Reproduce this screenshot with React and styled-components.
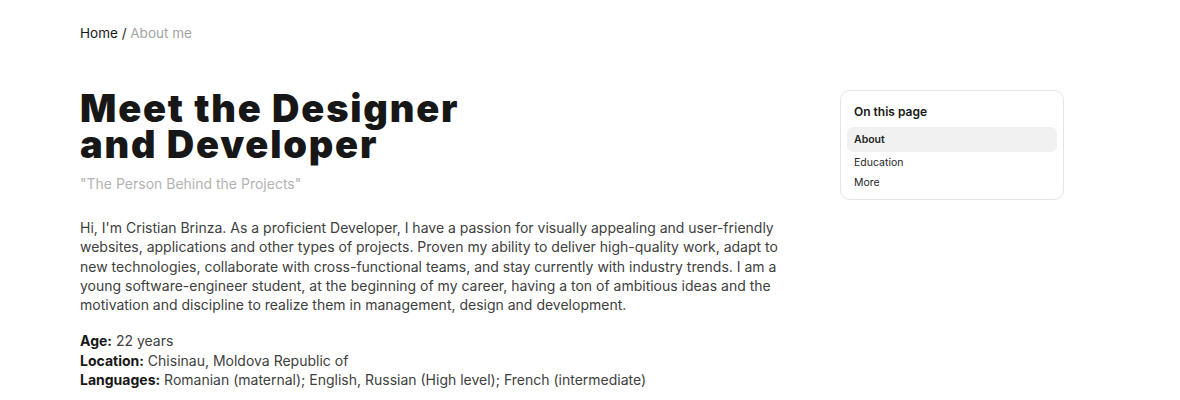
import React from "react";
import styled, { createGlobalStyle } from "styled-components";

const Global = createGlobalStyle`
  html, body { margin: 0; padding: 0; background: #ffffff; }
  body { font-family: Inter, "Noto Sans", sans-serif; color: #171717; -webkit-font-smoothing: antialiased; }
  * { box-sizing: border-box; }
`;

const Page = styled.div`
  padding: 23px 80px 0 80px;
`;

const Breadcrumb = styled.nav`
  font-size: 13.5px;
  line-height: 20px;
  color: #171717;
`;

const Crumb = styled.span`
  color: ${(p) => (p.$current ? "#a3a3a3" : "#171717")};
`;

const Layout = styled.div`
  display: grid;
  grid-template-columns: 760px 224px;
  margin-top: 47px;
  align-items: start;
`;

const Main = styled.main`
  width: 700px;
`;

const Title = styled.h1`
  margin: 0;
  font-size: 38px;
  line-height: 36px;
  font-weight: 900;
  letter-spacing: 1.8px;
  color: #171717;
`;

const Subtitle = styled.p`
  margin: 12px 0 0 0;
  font-size: 14px;
  line-height: 20px;
  color: #b3b3b3;
`;

const Paragraph = styled.p`
  margin: 24px 0 0 0;
  font-size: 14px;
  line-height: 19.25px;
  color: #404040;
`;

const InfoList = styled.div`
  margin-top: 17px;
  font-size: 14px;
  line-height: 19.5px;
  color: #404040;
`;

const InfoLine = styled.div``;

const Label = styled.strong`
  font-weight: 700;
  color: #171717;
`;

const Aside = styled.aside`
  border: 1px solid #e5e5e5;
  border-radius: 10px;
  padding: 6px;
`;

const AsideTitle = styled.div`
  padding: 7px 7px;
  font-size: 12px;
  line-height: 16px;
  font-weight: 600;
  color: #171717;
`;

const TocItem = styled.div`
  padding: ${(p) => (p.$active ? "5px 7px 4px" : "2px 7px")};
  margin-bottom: ${(p) => (p.$active ? "1px" : "0")};
  font-size: 10.5px;
  line-height: 16px;
  border-radius: 6px;
  background: ${(p) => (p.$active ? "#f1f1f1" : "transparent")};
  font-weight: ${(p) => (p.$active ? 600 : 400)};
  color: #262626;
`;

export default function App() {
  return (
    <>
      <Global />
      <Page>
        <Breadcrumb>
          <Crumb>Home</Crumb> / <Crumb $current>About me</Crumb>
        </Breadcrumb>
        <Layout>
          <Main>
            <Title>
              Meet the Designer
              <br />
              and Developer
            </Title>
            <Subtitle>"The Person Behind the Projects"</Subtitle>
            <Paragraph>
              Hi, I'm Cristian Brinza. As a proficient Developer, I have a passion for visually appealing and
              user-friendly websites, applications and other types of projects. Proven my ability to deliver
              high-quality work, adapt to new technologies, collaborate with cross-functional teams, and stay
              currently with industry trends. I am a young software-engineer student, at the beginning of my
              career, having a ton of ambitious ideas and the motivation and discipline to realize them in
              management, design and development.
            </Paragraph>
            <InfoList>
              <InfoLine>
                <Label>Age:</Label> 22 years
              </InfoLine>
              <InfoLine>
                <Label>Location:</Label> Chisinau, Moldova Republic of
              </InfoLine>
              <InfoLine>
                <Label>Languages:</Label> Romanian (maternal); English, Russian (High level); French (intermediate)
              </InfoLine>
            </InfoList>
          </Main>
          <Aside>
            <AsideTitle>On this page</AsideTitle>
            <TocItem $active>About</TocItem>
            <TocItem>Education</TocItem>
            <TocItem>More</TocItem>
          </Aside>
        </Layout>
      </Page>
    </>
  );
}
